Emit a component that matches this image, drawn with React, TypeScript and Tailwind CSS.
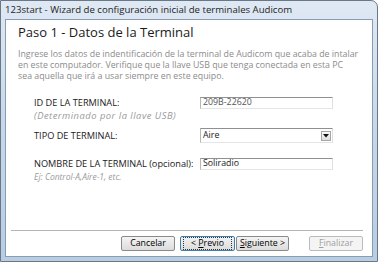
import React from 'react';

const font = { fontFamily: '"Open Sans", "Liberation Sans", sans-serif' };

const WinButton = ({
  children,
  width,
  focused,
  disabled,
}: {
  children: React.ReactNode;
  width: string;
  focused?: boolean;
  disabled?: boolean;
}) => (
  <div
    className={`${width} h-[15px] rounded-[2px] border flex items-center justify-center text-[8.8px] leading-none ${
      disabled
        ? 'border-[#b9bcbf] bg-[#f4f4f4] text-[#a0a0a0]'
        : focused
        ? 'border-[#3c7fb1] bg-gradient-to-b from-[#f2f2f2] to-[#dcdcdc] text-black'
        : 'border-[#8a8a8a] bg-gradient-to-b from-[#f4f4f4] to-[#dcdcdc] text-black'
    }`}
  >
    {focused ? (
      <span className="border border-dotted border-[#333] px-[7px] py-[1px]">{children}</span>
    ) : (
      children
    )}
  </div>
);

const inputBorder =
  'border-t border-l border-r border-b border-t-[#8f9092] border-l-[#b7b8ba] border-r-[#dedfe0] border-b-[#e4e5e6]';

export default function App() {
  return (
    <div className="w-[381px] h-[267px] bg-white overflow-hidden" style={font}>
      <div className="w-[378px] h-[262px] flex flex-col rounded-tr-[7px] border border-[#6b7787] bg-gradient-to-b from-[#dfe9f4] via-[#c6d7ea] to-[#b8cde3]">
        {/* Title bar */}
        <div className="h-[18px] flex items-center pl-[4px] text-[9.6px] text-[#1e1e1e] whitespace-nowrap">
          123start - Wizard de configuración inicial de terminales Audicom
        </div>

        {/* Client area */}
        <div className="flex-1 mx-[4px] mb-[4px] border border-[#8a9cb0] bg-white flex flex-col">
          <div className="pl-[12px] pt-[5px] text-[13px] leading-[14px] text-[#1a1a1a]">
            Paso 1 - Datos de la Terminal
          </div>
          <div className="pl-[12px] mt-[10px] text-[8.8px] leading-[11px] text-[#8c8c8c] whitespace-nowrap">
            Ingrese los datos de indentificación de la terminal de Audicom que acaba de intalar
            <br />
            en este computador. Verifique que la llave USB que tenga conectada en esta PC
            <br />
            sea aquella que irá a usar siempre en este equipo.
          </div>

          {/* Form */}
          <div className="pl-[28px] mt-[15px] flex flex-col text-[9.2px] text-[#1a1a1a]">
            <div className="flex items-center h-[12px]">
              <div className="w-[166px]">ID DE LA TERMINAL:</div>
              <div className={`w-[133px] h-[12px] ${inputBorder} flex items-center pl-[2px] text-[8.8px] text-[#555]`}>
                209B-22620
              </div>
            </div>
            <div className="h-[13px] leading-[13px] italic text-[#9a9a9a] text-[9.4px] tracking-[0.5px] whitespace-nowrap">
              (Determinado por la llave USB)
            </div>

            <div className="flex items-center h-[15px] mt-[6px]">
              <div className="w-[166px]">TIPO DE TERMINAL:</div>
              <div className={`w-[133px] h-[15px] ${inputBorder} flex items-center justify-between pl-[2px] pr-[1px] text-[8.8px]`}>
                <span>Aire</span>
                <div className="w-[10px] h-[10px] border border-[#a6a6a6] bg-gradient-to-b from-[#fafafa] to-[#dedede] flex items-center justify-center">
                  <svg width="6" height="4" viewBox="0 0 6 4">
                    <path d="M0 0 L6 0 L3 3.5 Z" fill="#111" />
                  </svg>
                </div>
              </div>
            </div>

            <div className="flex items-center h-[12px] mt-[15px]">
              <div className="w-[166px]">NOMBRE DE LA TERMINAL (opcional):</div>
              <div className={`w-[133px] h-[12px] ${inputBorder} flex items-center pl-[2px] text-[8.8px]`}>Soliradio</div>
            </div>
            <div className="h-[13px] leading-[13px] italic text-[#9a9a9a] text-[8.5px] whitespace-nowrap">
              Ej: Control-A,Aire-1, etc.
            </div>
          </div>

          <div className="flex-1" />

          <div className="ml-[5px] mr-[9px] h-px bg-[#b4b4b4]" />
          <div className="flex items-center justify-end pr-[9px] mt-[5px] mb-[5px]">
            <WinButton width="w-[54px]">Cancelar</WinButton>
            <div className="w-[5px]" />
            <WinButton width="w-[55px]" focused>
              &lt; <u>P</u>revio
            </WinButton>
            <div className="w-[1px]" />
            <WinButton width="w-[53px]">
              <span>
                <u>S</u>iguiente &gt;
              </span>
            </WinButton>
            <div className="w-[20px]" />
            <WinButton width="w-[54px]" disabled>
              <span>
                <u>F</u>inalizar
              </span>
            </WinButton>
          </div>
        </div>
      </div>
    </div>
  );
}
